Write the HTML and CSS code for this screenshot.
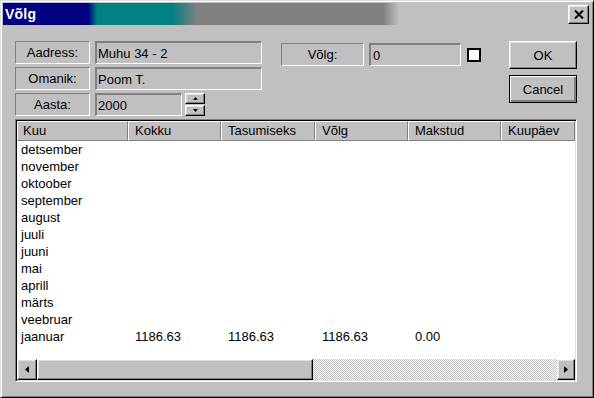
FILE: index.html
```html
<!DOCTYPE html>
<html lang="et">
<head>
<meta charset="utf-8">
<title>Võlg</title>
<link rel="stylesheet" href="styles.css">
</head>
<body>
<div class="window">
  <div class="titlebar">
    <span class="title">Võlg</span>
    <button class="close raised" aria-label="Close">
      <svg width="10" height="9" viewBox="0 0 10 9"><path d="M1 0.5 L9 8.5 M9 0.5 L1 8.5" stroke="#000" stroke-width="2" fill="none"/></svg>
    </button>
  </div>
  <div class="content">
    <div class="top">
      <div class="form">
        <div class="label">Aadress:</div>
        <div class="field">Muhu 34 - 2</div>
        <div class="label">Omanik:</div>
        <div class="field">Poom T.</div>
        <div class="label">Aasta:</div>
        <div class="year">
          <div class="field short">2000</div>
          <div class="spin">
            <button class="spin-btn raised"><svg width="5" height="3" viewBox="0 0 5 3"><path d="M2.5 0 L5 3 L0 3Z" fill="#000"/></svg></button>
            <button class="spin-btn raised"><svg width="5" height="3" viewBox="0 0 5 3"><path d="M0 0 L5 0 L2.5 3Z" fill="#000"/></svg></button>
          </div>
        </div>
      </div>
      <div class="debt">
        <div class="label debt-label">Võlg:</div>
        <div class="field debt-field">0</div>
        <span class="check"></span>
      </div>
      <div class="buttons">
        <button class="btn raised">OK</button>
        <button class="btn default">Cancel</button>
      </div>
    </div>
    <div class="list">
      <div class="header">
        <div class="hcell c1">Kuu</div>
        <div class="hcell c2">Kokku</div>
        <div class="hcell c3">Tasumiseks</div>
        <div class="hcell c4">Võlg</div>
        <div class="hcell c5">Makstud</div>
        <div class="hcell c6">Kuupäev</div>
      </div>
      <div class="rows">
        <div class="row"><span class="cell c1">detsember</span></div>
        <div class="row"><span class="cell c1">november</span></div>
        <div class="row"><span class="cell c1">oktoober</span></div>
        <div class="row"><span class="cell c1">september</span></div>
        <div class="row"><span class="cell c1">august</span></div>
        <div class="row"><span class="cell c1">juuli</span></div>
        <div class="row"><span class="cell c1">juuni</span></div>
        <div class="row"><span class="cell c1">mai</span></div>
        <div class="row"><span class="cell c1">aprill</span></div>
        <div class="row"><span class="cell c1">märts</span></div>
        <div class="row"><span class="cell c1">veebruar</span></div>
        <div class="row">
          <span class="cell c1">jaanuar</span>
          <span class="cell c2">1186.63</span>
          <span class="cell c3">1186.63</span>
          <span class="cell c4">1186.63</span>
          <span class="cell c5">0.00</span>
          <span class="cell c6"></span>
        </div>
      </div>
      <div class="hscroll">
        <div class="sbtn raised"><svg width="4" height="7" viewBox="0 0 4 7"><path d="M4 0 L0 3.5 L4 7Z" fill="#000"/></svg></div>
        <div class="thumb raised"></div>
        <div class="track"></div>
        <div class="sbtn right raised"><svg width="4" height="7" viewBox="0 0 4 7"><path d="M0 0 L4 3.5 L0 7Z" fill="#000"/></svg></div>
      </div>
    </div>
  </div>
</div>
</body>
</html>
```
FILE: styles.css
```css
* { box-sizing: border-box; margin: 0; padding: 0; }
html, body { width: 594px; height: 398px; overflow: hidden; background: #c0c0c0; }
body { font-family: "Liberation Sans", Arial, sans-serif; font-size: 13px; color: #000; }
button { font: inherit; color: inherit; background: #c0c0c0; padding: 0; cursor: default; }

.raised {
  background: #c0c0c0;
  border: 1px solid;
  border-color: #fff #000 #000 #fff;
  box-shadow: inset -1px -1px #808080, inset 1px 1px #dfdfdf;
  display: flex; align-items: center; justify-content: center;
}

.window {
  width: 594px; height: 398px;
  background: #c0c0c0;
  border: 1px solid;
  border-color: #dfdfdf #000 #000 #dfdfdf;
  box-shadow: inset 1px 1px #fff, inset -1px -1px #808080;
  padding: 2px;
  display: flex; flex-direction: column;
}

.titlebar {
  height: 22px; flex: none;
  display: flex; align-items: center; justify-content: space-between;
  padding: 0 2px 0 2px;
  background: linear-gradient(to right, #000080 0 85px, #008080 94px 169px, #808080 194px 380px, #c0c0c0 396px);
}
.title { color: #fff; font-weight: bold; font-size: 14px; letter-spacing: 0.2px; }
.close { width: 21px; height: 19px; }

.content { flex: 1; padding: 16px 0 0 12px; }

.top { display: flex; align-items: flex-start; }

.form {
  display: grid;
  grid-template-columns: 75px 167px;
  grid-auto-rows: 23px;
  column-gap: 5px; row-gap: 3px;
}
.label {
  border: 1px solid;
  border-color: #808080 #fff #fff #808080;
  display: flex; align-items: center; justify-content: center;
  padding-bottom: 1px;
}
.field {
  border-style: solid;
  border-width: 2px 1px 1px 2px;
  border-color: #808080 #fff #fff #808080;
  padding-left: 1px;
  display: flex; align-items: center;
}
.year { display: flex; gap: 3px; }
.field.short { width: 87px; }
.spin { display: flex; flex-direction: column; gap: 1px; width: 20px; }
.spin-btn { height: 11px; width: 20px; }

.debt { margin-left: 19px; margin-top: 2px; display: flex; align-items: center; height: 23px; }
.debt-label { width: 83px; height: 23px; }
.debt-field { width: 92px; height: 23px; margin-left: 5px; padding-left: 2px; }
.check { width: 14px; height: 14px; border: 2px solid #000; background: #fff; margin-left: 6px; }

.buttons { margin-left: 28px; display: flex; flex-direction: column; gap: 6px; width: 68px; }
.btn { height: 28px; width: 68px; }
.btn.default {
  border: 1px solid #000;
  box-shadow: inset 1px 1px #fff, inset -1px -1px #808080, inset -2px -2px #808080;
  display: flex; align-items: center; justify-content: center;
}

.list {
  margin-top: 3px;
  width: 562px; height: 263px;
  border: 1px solid;
  border-color: #808080 #fff #fff #808080;
  box-shadow: inset 1px 1px #000, inset -1px -1px #dfdfdf;
  padding: 1px;
  background: #fff;
  display: flex; flex-direction: column;
  overflow: hidden;
}
.header { display: flex; height: 20px; flex: none; background: #c0c0c0; }
.hcell {
  flex: none;
  border: 1px solid;
  border-color: #fff #808080 #808080 #fff;
  line-height: 17px;
  padding-left: 6px;
  white-space: nowrap; overflow: hidden;
}
.hcell.c1 { padding-left: 5px; }

.c1 { width: 111px; }
.c2 { width: 93px; }
.c3 { width: 94px; }
.c4 { width: 93px; }
.c5 { width: 93px; }
.c6 { width: 74px; }

.rows { flex: 1; background: #fff; }
.row { display: flex; height: 17px; line-height: 17px; }
.cell { flex: none; padding-left: 7px; white-space: nowrap; }
.cell.c1 { padding-left: 4px; }

.hscroll { display: flex; height: 21px; flex: none; }
.sbtn { width: 20px; height: 21px; flex: none; }
.sbtn.right { width: 18px; }
.thumb { width: 276px; height: 21px; flex: none; }
.track {
  flex: 1;
  background: repeating-conic-gradient(#fff 0 25%, #c0c0c0 0 50%) 0 0 / 2px 2px;
}
```
